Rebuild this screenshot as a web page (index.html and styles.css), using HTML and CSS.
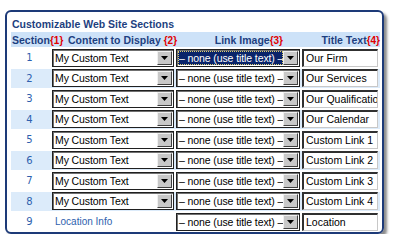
FILE: index.html
```html
<!DOCTYPE html>
<html lang="en">
<head>
  <meta charset="UTF-8">
  <title>Customizable Web Site Sections</title>
  <link rel="stylesheet" href="styles.css">
</head>
<body>
  <div class="panel">
    <h1>Customizable Web Site Sections</h1>
    <table class="sections">
      <tr class="head">
        <th class="c-num">Section<span class="ref">{1}</span></th>
        <th class="c-content">Content to Display <span class="ref">{2}</span></th>
        <th class="c-link">Link Image<span class="ref">{3}</span></th>
        <th class="c-title">Title Text<span class="ref">{4}</span></th>
      </tr>
      <tr>
        <td class="num">1</td>
        <td><div class="select wide"><span class="val">My Custom Text</span><span class="arrow"><svg width="7" height="4" viewBox="0 0 7 4"><path d="M0 0h7L3.5 4z"/></svg></span></div></td>
        <td><div class="select"><span class="val focus">– none (use title text) –</span><span class="arrow"><svg width="7" height="4" viewBox="0 0 7 4"><path d="M0 0h7L3.5 4z"/></svg></span></div></td>
        <td><div class="field">Our Firm</div></td>
      </tr>
      <tr class="alt">
        <td class="num">2</td>
        <td><div class="select wide"><span class="val">My Custom Text</span><span class="arrow"><svg width="7" height="4" viewBox="0 0 7 4"><path d="M0 0h7L3.5 4z"/></svg></span></div></td>
        <td><div class="select"><span class="val">– none (use title text) –</span><span class="arrow"><svg width="7" height="4" viewBox="0 0 7 4"><path d="M0 0h7L3.5 4z"/></svg></span></div></td>
        <td><div class="field">Our Services</div></td>
      </tr>
      <tr>
        <td class="num">3</td>
        <td><div class="select wide"><span class="val">My Custom Text</span><span class="arrow"><svg width="7" height="4" viewBox="0 0 7 4"><path d="M0 0h7L3.5 4z"/></svg></span></div></td>
        <td><div class="select"><span class="val">– none (use title text) –</span><span class="arrow"><svg width="7" height="4" viewBox="0 0 7 4"><path d="M0 0h7L3.5 4z"/></svg></span></div></td>
        <td><div class="field">Our Qualifications</div></td>
      </tr>
      <tr class="alt">
        <td class="num">4</td>
        <td><div class="select wide"><span class="val">My Custom Text</span><span class="arrow"><svg width="7" height="4" viewBox="0 0 7 4"><path d="M0 0h7L3.5 4z"/></svg></span></div></td>
        <td><div class="select"><span class="val">– none (use title text) –</span><span class="arrow"><svg width="7" height="4" viewBox="0 0 7 4"><path d="M0 0h7L3.5 4z"/></svg></span></div></td>
        <td><div class="field">Our Calendar</div></td>
      </tr>
      <tr>
        <td class="num">5</td>
        <td><div class="select wide"><span class="val">My Custom Text</span><span class="arrow"><svg width="7" height="4" viewBox="0 0 7 4"><path d="M0 0h7L3.5 4z"/></svg></span></div></td>
        <td><div class="select"><span class="val">– none (use title text) –</span><span class="arrow"><svg width="7" height="4" viewBox="0 0 7 4"><path d="M0 0h7L3.5 4z"/></svg></span></div></td>
        <td><div class="field">Custom Link 1</div></td>
      </tr>
      <tr class="alt">
        <td class="num">6</td>
        <td><div class="select wide"><span class="val">My Custom Text</span><span class="arrow"><svg width="7" height="4" viewBox="0 0 7 4"><path d="M0 0h7L3.5 4z"/></svg></span></div></td>
        <td><div class="select"><span class="val">– none (use title text) –</span><span class="arrow"><svg width="7" height="4" viewBox="0 0 7 4"><path d="M0 0h7L3.5 4z"/></svg></span></div></td>
        <td><div class="field">Custom Link 2</div></td>
      </tr>
      <tr>
        <td class="num">7</td>
        <td><div class="select wide"><span class="val">My Custom Text</span><span class="arrow"><svg width="7" height="4" viewBox="0 0 7 4"><path d="M0 0h7L3.5 4z"/></svg></span></div></td>
        <td><div class="select"><span class="val">– none (use title text) –</span><span class="arrow"><svg width="7" height="4" viewBox="0 0 7 4"><path d="M0 0h7L3.5 4z"/></svg></span></div></td>
        <td><div class="field">Custom Link 3</div></td>
      </tr>
      <tr class="alt">
        <td class="num">8</td>
        <td><div class="select wide"><span class="val">My Custom Text</span><span class="arrow"><svg width="7" height="4" viewBox="0 0 7 4"><path d="M0 0h7L3.5 4z"/></svg></span></div></td>
        <td><div class="select"><span class="val">– none (use title text) –</span><span class="arrow"><svg width="7" height="4" viewBox="0 0 7 4"><path d="M0 0h7L3.5 4z"/></svg></span></div></td>
        <td><div class="field">Custom Link 4</div></td>
      </tr>
      <tr>
        <td class="num">9</td>
        <td class="info">Location Info</td>
        <td><div class="select"><span class="val">– none (use title text) –</span><span class="arrow"><svg width="7" height="4" viewBox="0 0 7 4"><path d="M0 0h7L3.5 4z"/></svg></span></div></td>
        <td><div class="field">Location</div></td>
      </tr>
    </table>
  </div>
</body>
</html>
```

FILE: styles.css
```css
body { margin: 0; background: #fff; font-family: "Liberation Sans", Arial, sans-serif; }
.panel { margin: 10px 0 0 5px; width: 379px; height: 224px; box-sizing: border-box; border: 2px solid #1d3a78; border-radius: 6px; box-shadow: 3px 3px 3px #8a8a8a; overflow: hidden; }
h1 { margin: 6px 0 0 5px; font-size: 10.5px; line-height: 13px; font-weight: bold; color: #1d3f80; }
.sections { margin: 0 0 0 4px; border-collapse: separate; border-spacing: 0 1px; width: 369px; table-layout: fixed; }
.sections th, .sections td { box-sizing: border-box; padding: 0; }
.sections th { background: #cde2f8; color: #1d3f80; font-size: 10.5px; font-weight: bold; height: 15px; white-space: nowrap; }
.ref { color: #e00000; font-size: 10px; font-weight: bold; }
.c-num { width: 41px; text-align: left; padding-left: 1px !important; }
.c-content { width: 124px; text-align: left; padding-left: 16px !important; }
.c-link { width: 126px; text-align: right; padding-right: 19px !important; }
.c-title { width: 78px; text-align: right; }
.sections td { height: 19.5px; }
.sections tr.alt td { background: #dcebfa; }
.num { text-align: center; color: #2e5fae; font-family: "DejaVu Sans", Verdana, sans-serif; font-size: 10px; padding-right: 4px !important; }
.info { color: #2e5fae; font-size: 10px; padding-left: 3px !important; }
.select { display: flex; align-items: center; width: 124px; height: 18px; box-sizing: border-box; border: 1px solid #202020; box-shadow: inset 1px 1px #707070; background: #fff; font-size: 10.5px; color: #000; overflow: hidden; }
.select.wide { width: 122px; }
.val { flex: 1; padding: 1px 0 1px 2px; white-space: nowrap; overflow: hidden; line-height: 12px; letter-spacing: -0.1px; }
.val.focus { background: #0a246a; color: #fff; outline: 1px dotted #e0d070; outline-offset: -1px; margin: 1px 0 1px 1px; padding: 1px 0 1px 1px; }
.arrow { display: flex; align-items: center; justify-content: center; flex: none; width: 15px; height: 14px; margin-right: 1px; background: #c8c8c8; box-sizing: border-box; border: 1px solid; border-color: #f0f0f0 #404040 #404040 #f0f0f0; }
.arrow svg { fill: #000; }
.field { width: 76px; height: 18px; box-sizing: border-box; border: 1px solid #c8c8c8; border-top: 2px solid #303030; border-left: 2px solid #303030; background: #fff; font-size: 10.5px; line-height: 14px; padding-left: 2px; white-space: nowrap; overflow: hidden; }
```
